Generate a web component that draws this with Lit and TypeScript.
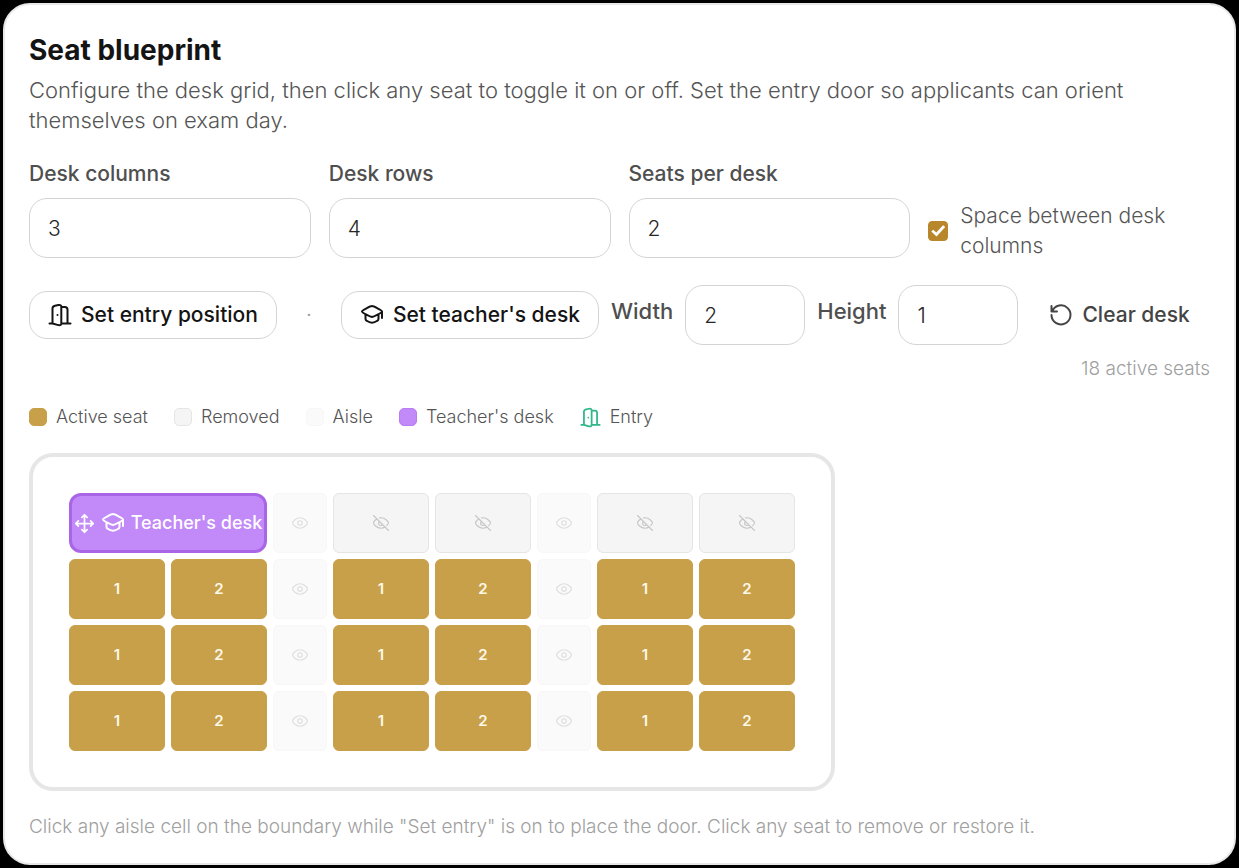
import { LitElement, html, css, svg, nothing } from "lit";
import { customElement, property, state } from "lit/decorators.js";

const ICONS = {
  door: svg`<path d="M1.500 20.500h3M13.300 20.500h9.200M4.500 20.500V5.500c0-1.700.8-2.300 2.500-2.700l3.400-.8c1.900-.4 2.900.3 2.900 2.100v16.300c0 1.600-1 2.100-2.900 1.700l-5.900-1.600M13.300 4h3.500c1.800 0 2.700.8 2.700 2.600v13.900M9.500 12v.1"/>`,
  cap: svg`<path d="M2 8.500c0-1.200 8.500-5.500 10-5.500s10 4.300 10 5.500S13.500 14 12 14 2 9.700 2 8.500zM5.500 11.300v4.400c0 1 .3 1.500 1.200 2.100 3.600 2.600 7 2.600 10.600 0 .9-.6 1.200-1.100 1.200-2.100v-4.400M22 8.500V15"/>`,
  move: svg`<path d="M12 2v20M2 12h20M9 5l3-3 3 3M9 19l3 3 3-3M5 9l-3 3 3 3M19 9l3 3-3 3"/>`,
  reset: svg`<path d="M2.500 3v5.500H8M3.200 8.300A9.500 9.500 0 1 1 2.500 12"/>`,
  eye: svg`<path d="M2 12c0-1.300 4-7 10-7s10 5.700 10 7-4 7-10 7-10-5.700-10-7z"/><circle cx="12" cy="12" r="3"/>`,
  eyeOff: svg`<path d="M2 2l20 20M6.700 6.800C3.800 8.500 2 11.200 2 12c0 1.300 4 7 10 7 2.100 0 3.900-.7 5.400-1.600M10 5.200A9 9 0 0 1 12 5c6 0 10 5.700 10 7 0 .6-.9 2.100-2.400 3.600M9.900 9.900a3 3 0 1 0 4.200 4.200"/>`,
};

const icon = (name: keyof typeof ICONS, cls = "") => html`
  <svg class="icon ${cls}" viewBox="0 0 24 24" aria-hidden="true">${ICONS[name]}</svg>
`;

@customElement("seat-grid")
export class SeatGrid extends LitElement {
  @property({ type: Number }) columns = 3;
  @property({ type: Number }) rows = 4;
  @property({ type: Number }) seats = 2;
  @property({ type: Boolean }) spaced = true;
  @state() private removed = new Set(["0-1-0", "0-1-1", "0-2-0", "0-2-1"]);

  static styles = css`
    :host { display: block; }
    .room {
      width: fit-content;
      padding: 36px;
      border: 4px solid #e6e6e6;
      border-radius: 24px;
      background: #fff;
    }
    .grid { display: grid; grid-auto-rows: 60px; gap: 6px; }
    button { font: inherit; margin: 0; padding: 0; cursor: pointer; }
    .cell {
      display: flex;
      align-items: center;
      justify-content: center;
      border: 1px solid #c8a04a;
      border-radius: 6px;
      background: #c8a04a;
      color: #fff8e8;
      font-size: 15px;
      font-weight: 600;
      line-height: 20px;
    }
    .removed { background: #f5f5f5; border-color: #e5e5e5; color: #c6c6c6; }
    .aisle { background: #fafafa; border-color: #f7f7f7; color: #dedede; }
    .teacher {
      display: flex;
      align-items: center;
      justify-content: center;
      gap: 6px;
      grid-column: span 2;
      border: 3px solid #a866e6;
      border-radius: 12px;
      background: #c289f8;
      color: #fff;
      font-size: 18px;
      font-weight: 500;
      white-space: nowrap;
    }
    .icon {
      width: 24px;
      height: 24px;
      flex: none;
      fill: none;
      stroke: currentColor;
      stroke-width: 2;
      stroke-linecap: round;
      stroke-linejoin: round;
    }
    .move { width: 21px; height: 21px; }
    .small { width: 18px; height: 18px; stroke-width: 1.5; }
  `;

  private toggle(id: string) {
    const next = new Set(this.removed);
    next.has(id) ? next.delete(id) : next.add(id);
    this.removed = next;
  }

  private renderDesk(row: number, col: number) {
    const aisle = this.spaced && col < this.columns - 1
      ? html`<button class="cell aisle" aria-label="Aisle">${icon("eye", "small")}</button>`
      : nothing;
    if (row === 0 && col === 0) {
      return html`<button class="teacher">${icon("move", "move")}${icon("cap")}<span>Teacher's desk</span></button>${aisle}`;
    }
    return html`${Array.from({ length: this.seats }, (_, s) => {
      const id = `${row}-${col}-${s}`;
      const off = this.removed.has(id);
      return html`<button
        class="cell ${off ? "removed" : ""}"
        aria-label="Seat ${s + 1}"
        @click=${() => this.toggle(id)}
      >${off ? icon("eyeOff", "small") : s + 1}</button>`;
    })}${aisle}`;
  }

  render() {
    const desk = Array(this.seats).fill("96px").join(" ");
    const template = Array(this.columns).fill(desk).join(this.spaced ? " 54px " : " ");
    return html`<div class="room">
      <div class="grid" style="grid-template-columns: ${template}">
        ${Array.from({ length: this.rows }, (_, r) =>
          Array.from({ length: this.columns }, (_, c) => this.renderDesk(r, c)))}
      </div>
    </div>`;
  }
}

@customElement("app-root")
export class AppRoot extends LitElement {
  static styles = css`
    :host {
      display: block;
      box-sizing: border-box;
      min-height: 100vh;
      padding: 3px;
      background: #000;
      color: #555;
      font-family: Inter, "Liberation Sans", sans-serif;
      font-size: 21px;
      font-weight: 300;
      line-height: 30px;
    }
    *, *::before { box-sizing: border-box; }
    .card {
      padding: 24px;
      border: 2px solid #e8e8e8;
      border-radius: 27px;
      background: #fff;
    }
    h2 { margin: 0 0 4px; font-size: 28px; line-height: 42px; font-weight: 700; color: #141414; }
    p { margin: 0; }
    .intro { font-size: 22px; }
    .fields {
      display: grid;
      grid-template-columns: repeat(4, 1fr);
      gap: 18px;
      margin-top: 24px;
      align-items: start;
    }
    .field { display: grid; gap: 9px; padding-bottom: 3px; }
    .label { font-weight: 500; color: #4f4f4f; }
    .input {
      width: 100%;
      height: 60px;
      padding: 0 18px;
      border: 1px solid #d4d4d4;
      border-radius: 18px;
      background: #fff;
      color: #262626;
      font: inherit;
    }
    .input.narrow { width: 120px; }
    .check { display: flex; align-items: center; gap: 12px; align-self: end; }
    .tick {
      appearance: none;
      display: grid;
      place-items: center;
      flex: none;
      width: 20px;
      height: 20px;
      margin: 0;
      border: 1px solid #b8862b;
      border-radius: 4px;
      background: #fff;
    }
    .tick:checked { background: #b8862b; }
    .tick:checked::before {
      content: "";
      width: 14px;
      height: 12px;
      background: #fff;
      clip-path: polygon(0 54%, 14% 40%, 36% 63%, 84% 3%, 100% 16%, 38% 95%);
    }
    .toolbar {
      display: flex;
      flex-wrap: wrap;
      align-items: center;
      gap: 12px;
      margin-top: 24px;
    }
    .btn {
      display: inline-flex;
      align-items: center;
      gap: 9px;
      height: 48px;
      padding: 0 18px;
      border: 1px solid #d4d4d4;
      border-radius: 18px;
      background: #fff;
      color: #141414;
      font: inherit;
      font-weight: 500;
      white-space: nowrap;
      cursor: pointer;
    }
    .btn.ghost { border-color: transparent; background: none; color: #444; }
    .dot { width: 40px; text-align: center; color: #999; }
    .toolbar .label { padding-bottom: 8px; font-size: 22px; }
    .count { margin-left: auto; font-size: 19px; line-height: 24px; color: #a0a0a0; }
    .legend {
      display: flex;
      flex-wrap: wrap;
      gap: 26px;
      margin: 24px 0;
      padding: 0;
      list-style: none;
      font-size: 18px;
      line-height: 24px;
    }
    .legend li { display: flex; align-items: center; gap: 9px; }
    .swatch { width: 18px; height: 18px; border-radius: 5px; background: #c8a04a; border: 1px solid #c8a04a; }
    .swatch.removed { background: #f5f5f5; border-color: #e5e5e5; }
    .swatch.aisle { background: #fafafa; border-color: #f7f7f7; }
    .swatch.teacher { background: #c289f8; border-color: #b97cf2; }
    .hint { margin-top: 24px; font-size: 19px; line-height: 24px; color: #a0a0a0; }
    .icon {
      width: 24px;
      height: 24px;
      flex: none;
      fill: none;
      stroke: currentColor;
      stroke-width: 2;
      stroke-linecap: round;
      stroke-linejoin: round;
    }
    .entry { width: 21px; height: 21px; color: #2fb68a; }
  `;

  render() {
    return html`
      <section class="card">
        <h2>Seat blueprint</h2>
        <p class="intro">Configure the desk grid, then click any seat to toggle it on or off. Set the entry door so applicants can orient themselves on exam day.</p>
        <div class="fields">
          <div class="field"><label class="label" for="cols">Desk columns</label><input class="input" id="cols" inputmode="numeric" value="3" /></div>
          <div class="field"><label class="label" for="rows">Desk rows</label><input class="input" id="rows" inputmode="numeric" value="4" /></div>
          <div class="field"><label class="label" for="seats">Seats per desk</label><input class="input" id="seats" inputmode="numeric" value="2" /></div>
          <label class="check"><input class="tick" type="checkbox" checked /><span>Space between desk columns</span></label>
        </div>
        <div class="toolbar">
          <button class="btn">${icon("door")}Set entry position</button>
          <span class="dot">·</span>
          <button class="btn">${icon("cap")}Set teacher's desk</button>
          <label class="label" for="w">Width</label><input class="input narrow" id="w" inputmode="numeric" value="2" />
          <label class="label" for="h">Height</label><input class="input narrow" id="h" inputmode="numeric" value="1" />
          <button class="btn ghost">${icon("reset")}Clear desk</button>
          <span class="count">18 active seats</span>
        </div>
        <ul class="legend">
          <li><span class="swatch"></span>Active seat</li>
          <li><span class="swatch removed"></span>Removed</li>
          <li><span class="swatch aisle"></span>Aisle</li>
          <li><span class="swatch teacher"></span>Teacher's desk</li>
          <li>${icon("door", "entry")}Entry</li>
        </ul>
        <seat-grid></seat-grid>
        <p class="hint">Click any aisle cell on the boundary while "Set entry" is on to place the door. Click any seat to remove or restore it.</p>
      </section>
    `;
  }
}
